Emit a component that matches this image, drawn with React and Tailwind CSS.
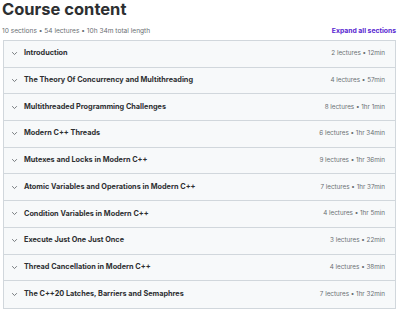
const sections = [
  ['Introduction', '2 lectures • 12min'],
  ['The Theory Of Concurrency and Multithreading', '4 lectures • 57min'],
  ['Multithreaded Programming Challenges', '8 lectures • 1hr 1min'],
  ['Modern C++ Threads', '6 lectures • 1hr 34min'],
  ['Mutexes and Locks in Modern C++', '9 lectures • 1hr 36min'],
  ['Atomic Variables and Operations in Modern C++', '7 lectures • 1hr 37min'],
  ['Condition Variables in Modern C++', '4 lectures • 1hr 5min'],
  ['Execute Just One Just Once', '3 lectures • 22min'],
  ['Thread Cancellation in Modern C++', '4 lectures • 38min'],
  ['The C++20 Latches, Barriers and Semaphres', '7 lectures • 1hr 32min'],
]

function Chevron() {
  return (
    <svg width="7" height="7" viewBox="0 0 10 10" className="text-[#6a6f73]">
      <path d="M2 3.5 L5 6.5 L8 3.5" fill="none" stroke="currentColor" strokeWidth="1.3" strokeLinecap="round" />
    </svg>
  )
}

export default function App() {
  return (
    <div className="w-[400px] h-[309px] overflow-hidden bg-white text-[#2d2f31] px-[2px]" style={{ fontFamily: 'Inter, "Noto Sans", sans-serif' }}>
      <h2 className="text-[16.5px] font-bold leading-[16px] pt-[1px] tracking-[0px]">Course content</h2>
      <div className="flex items-end justify-between mt-[9px] pl-[0px] pr-[2px]">
        <span className="text-[6.6px] text-[#6a6f73] leading-[10px]">10 sections • 54 lectures • 10h 34m total length</span>
        <button className="text-[6.8px] font-bold text-[#5624d0] leading-[10px]">Expand all sections</button>
      </div>
      <div className="mt-[4px] ml-[1px] mr-[2px] border border-[#d1d7dc]">
        {sections.map(([title, meta], i) => (
          <div key={title} className={`h-[26.7px] bg-[#f7f9fa] flex items-center pl-[7px] pr-[10px] ${i < sections.length - 1 ? 'border-b border-[#d1d7dc]' : ''}`}>
            <Chevron />
            <span className="ml-[6px] text-[7.3px] font-bold flex-1">{title}</span>
            <span className="text-[6.3px] text-[#6a6f73]">{meta}</span>
          </div>
        ))}
      </div>
    </div>
  )
}
